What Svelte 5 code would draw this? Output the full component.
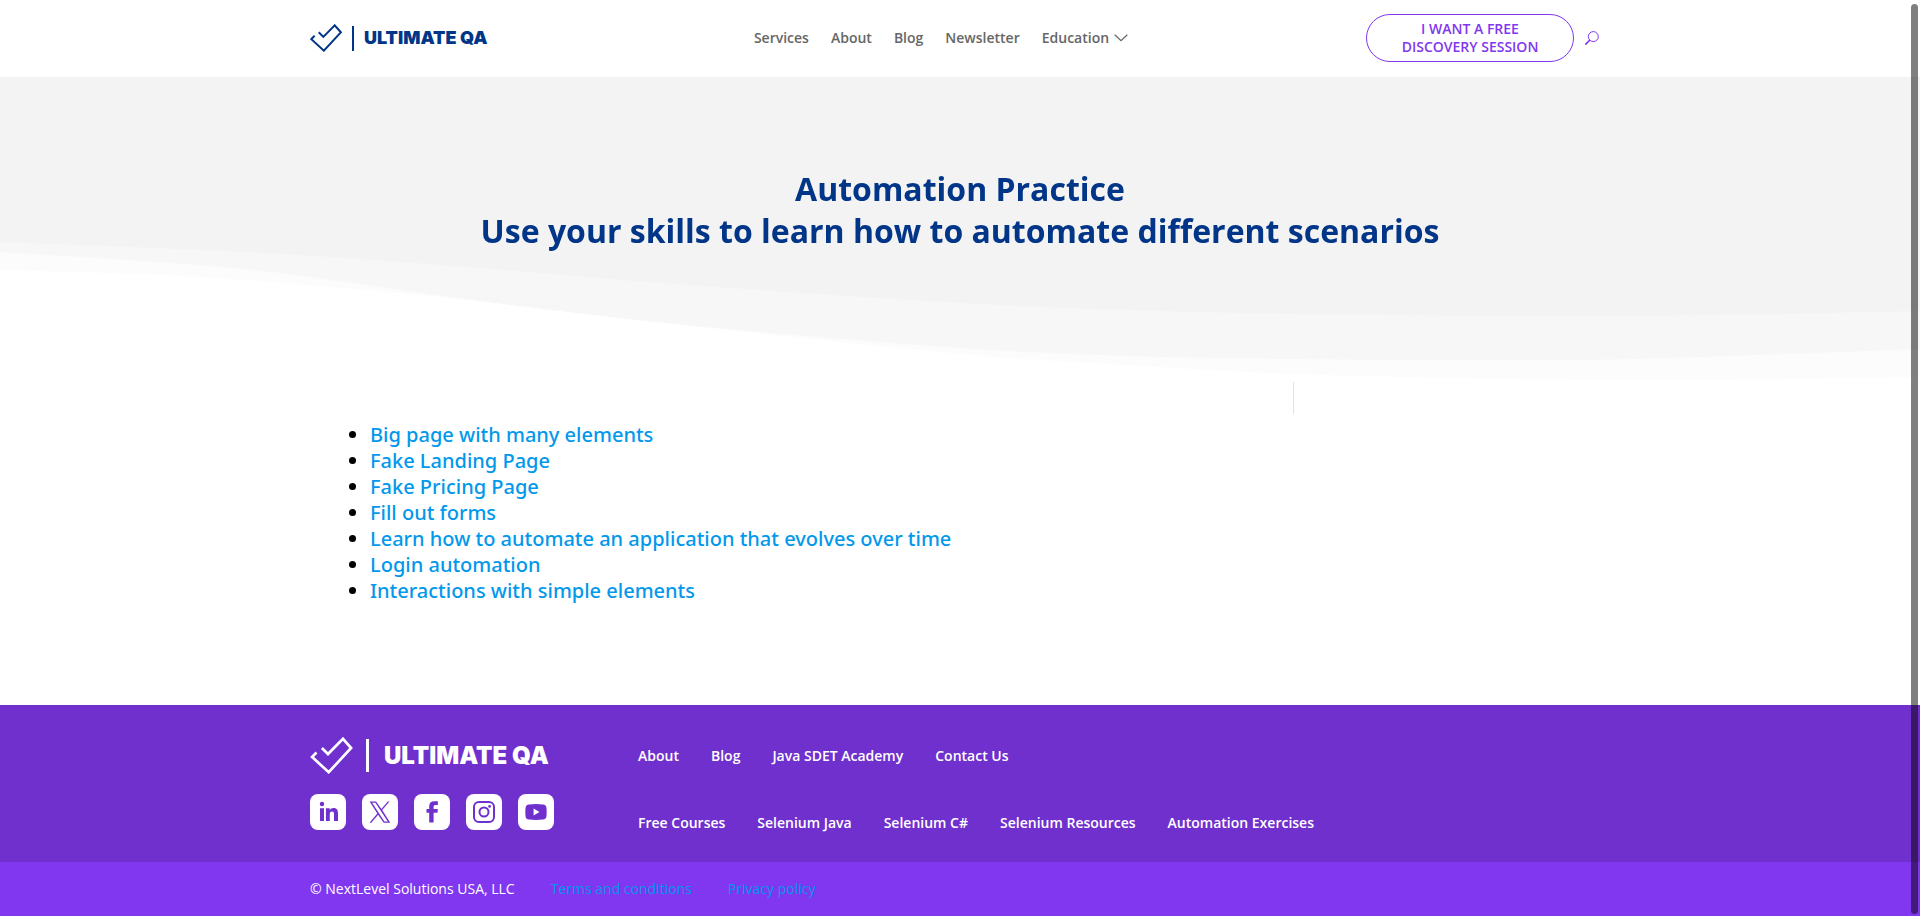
<script>
  const mainLinks = ['Services', 'About', 'Blog', 'Newsletter'];
  const practice = [
    'Big page with many elements',
    'Fake Landing Page',
    'Fake Pricing Page',
    'Fill out forms',
    'Learn how to automate an application that evolves over time',
    'Login automation',
    'Interactions with simple elements'
  ];
  const companyLinks = ['About', 'Blog', 'Java SDET Academy', 'Contact Us'];
  const courseLinks = ['Free Courses', 'Selenium Java', 'Selenium C#', 'Selenium Resources', 'Automation Exercises'];

  // Wave edges, in a 1920 x 150 box, from the palest band to the darkest.
  const waves = [
    { fill: '#fcfcfc', pts: [[0, 38], [184, 44], [367, 58], [480, 69], [674, 92], [960, 122], [1126, 133], [1294, 142], [1512, 147], [1696, 148], [1920, 145]] },
    { fill: '#f7f7f7', pts: [[0, 20], [184, 32], [288, 42], [480, 69], [674, 92], [960, 116], [1126, 124], [1294, 127], [1451, 128], [1635, 127], [1920, 117]] },
    { fill: '#f3f3f3', pts: [[0, 10], [263, 21], [480, 36], [648, 50], [960, 71], [1126, 78], [1294, 82], [1512, 84], [1727, 83], [1920, 79]] }
  ];

  function wavePath(p) {
    let d = `M0 0V${p[0][1]}`;
    for (let i = 0; i < p.length - 1; i++) {
      const a = p[Math.max(i - 1, 0)];
      const b = p[i];
      const c = p[i + 1];
      const e = p[Math.min(i + 2, p.length - 1)];
      const s1 = (c[1] - a[1]) / (c[0] - a[0]);
      const s2 = (e[1] - b[1]) / (e[0] - b[0]);
      const h = (c[0] - b[0]) / 3;
      d += `C${b[0] + h} ${b[1] + s1 * h} ${c[0] - h} ${c[1] - s2 * h} ${c[0]} ${c[1]}`;
    }
    return d + 'V0Z';
  }
</script>

{#snippet mark()}
  <svg class="mark" viewBox="0 0 42 37" aria-hidden="true">
    <path d="M6 15.500L1.600 20L18.200 35.200L40.600 11L32.500 1.800L17.500 17L11.400 11" fill="none" stroke="currentColor" stroke-width="2.700" />
  </svg>
{/snippet}

<header class="top">
  <div class="wrap bar">
    <a class="logo" href="#home">
      {@render mark()}
      <span class="rule"></span>
      <span class="name">ULTIMATE QA</span>
    </a>
    <nav class="menu" aria-label="Main">
      {#each mainLinks as item}
        <a href="#{item}">{item}</a>
      {/each}
      <a class="drop" href="#Education">
        Education
        <svg width="14" height="8" viewBox="0 0 14 8" aria-hidden="true">
          <path d="M0.700 0.700L7 6.700L13.300 0.700" fill="none" stroke="currentColor" stroke-width="1.300" />
        </svg>
      </a>
    </nav>
    <div class="actions">
      <a class="cta" href="#session">I WANT A FREE DISCOVERY SESSION</a>
      <button class="search" type="button" aria-label="Search">
        <svg width="14" height="14" viewBox="0 0 14 14" aria-hidden="true">
          <circle cx="8.300" cy="5.600" r="5" fill="none" stroke="currentColor" stroke-width="1" />
          <path d="M4.600 9.300L0.800 13.100" stroke="currentColor" stroke-width="1.600" stroke-linecap="round" />
        </svg>
      </button>
    </div>
  </div>
</header>

<main>
  <section class="hero">
    <h1>Automation Practice<br />Use your skills to learn how to automate different scenarios</h1>
    <svg class="waves" viewBox="0 0 1920 150" preserveAspectRatio="none" aria-hidden="true">
      {#each waves as wave}
        <path d={wavePath(wave.pts)} fill={wave.fill} />
      {/each}
    </svg>
  </section>

  <section class="wrap content">
    <ul>
      {#each practice as item}
        <li><a href="#practice">{item}</a></li>
      {/each}
    </ul>
    <aside></aside>
  </section>
</main>

<footer>
  <div class="wrap foot">
    <div class="brand">
      <a class="logo large" href="#home">
        {@render mark()}
        <span class="rule"></span>
        <span class="name">ULTIMATE QA</span>
      </a>
      <div class="social">
        <a href="#linkedin" aria-label="LinkedIn">
          <svg viewBox="0 0 36 36"><path d="M10 14.200h4V27h-4zM12 7.800a2.200 2.200 0 1 1 0 4.400a2.200 2.200 0 0 1 0-4.400zM15.900 14.200h3.800v1.800c.7-1.300 2.100-2.100 3.800-2.100c3.600 0 4.500 2.400 4.500 5.700V27h-4v-6.500c0-1.600-.2-2.900-2-2.900s-2.200 1.300-2.200 2.900V27h-3.900z" /></svg>
        </a>
        <a href="#x" aria-label="X">
          <svg viewBox="0 0 36 36"><path fill-rule="evenodd" d="M7.600 7.400h6.500l5.300 7.500L25.800 7.400h1.700L20.200 16L28.200 28.800h-6.500L16.100 20.700L9.300 28.800H7.500L15.300 19.500zM10.100 8.700L22.400 27.500h3.400L13.400 8.700z" /></svg>
        </a>
        <a href="#facebook" aria-label="Facebook">
          <svg viewBox="0 0 36 36"><path d="M15.200 28.500V18.700H12.500v-3.800h2.700v-2.700c0-3.100 1.700-5 5-5h3.700v3.900h-2.400c-1.500 0-1.900.7-1.900 1.900v1.900h4.300l-.5 3.800h-3.800v9.800z" /></svg>
        </a>
        <a href="#instagram" aria-label="Instagram">
          <svg viewBox="0 0 36 36"><rect x="8" y="8" width="20" height="20" rx="5" fill="none" stroke="currentColor" stroke-width="2" /><circle cx="18" cy="18" r="4.500" fill="none" stroke="currentColor" stroke-width="2" /><circle cx="23.600" cy="12.400" r="1.400" /></svg>
        </a>
        <a href="#youtube" aria-label="YouTube">
          <svg viewBox="0 0 36 36"><path fill-rule="evenodd" d="M11 10.400Q18 9.800 25 10.400Q28.300 10.700 28.500 14Q28.900 18 28.500 22Q28.200 25.300 25 25.600Q18 26.200 11 25.600Q7.700 25.300 7.500 22Q7.100 18 7.500 14Q7.800 10.700 11 10.400zM15.600 14.500V21.500L21.500 18z" /></svg>
        </a>
      </div>
    </div>
    <nav class="links" aria-label="Footer">
      <div class="row">
        {#each companyLinks as item}<a href="#{item}">{item}</a>{/each}
      </div>
      <div class="row">
        {#each courseLinks as item}<a href="#courses">{item}</a>{/each}
      </div>
    </nav>
  </div>
  <div class="legal">
    <div class="wrap">
      <span>© NextLevel Solutions USA, LLC</span>
      <a href="#terms">Terms and conditions</a>
      <a href="#privacy">Privacy policy</a>
    </div>
  </div>
</footer>

<div class="scroll-thumb" aria-hidden="true"></div>

<style>
  :global(body) {
    margin: 0;
    background: #fff;
    font-family: 'Open Sans', 'Noto Sans', sans-serif;
    font-size: 14px;
    -webkit-font-smoothing: antialiased;
  }
  a {
    color: inherit;
    text-decoration: none;
  }
  .wrap {
    box-sizing: border-box;
    width: 100%;
    max-width: 1300px;
    margin: 0 auto;
  }
  .bar {
    display: grid;
    grid-template-columns: 1fr auto 1fr;
    align-items: center;
    padding: 14px 0 15px;
  }
  .logo {
    display: flex;
    align-items: center;
    gap: 10px;
    color: #003588;
  }
  .mark {
    width: 32px;
    height: 28px;
  }
  .rule {
    width: 2px;
    height: 25px;
    background: currentColor;
  }
  .name {
    font-family: Inter, sans-serif;
    font-weight: 900;
    font-size: 18px;
    line-height: 24px;
    white-space: nowrap;
  }
  .menu {
    display: flex;
    gap: 22px;
    padding-right: 38px;
    font-weight: 600;
    line-height: 20px;
    color: #666;
  }
  .drop {
    display: flex;
    align-items: center;
    gap: 5px;
  }
  .actions {
    display: flex;
    justify-content: flex-end;
    align-items: center;
    gap: 11px;
    padding-right: 11px;
    color: #8136f0;
  }
  .cta {
    box-sizing: border-box;
    width: 208px;
    padding: 5px 32px;
    border: 1px solid currentColor;
    border-radius: 25px;
    font-weight: 600;
    line-height: 18px;
    text-align: center;
  }
  .search {
    display: flex;
    padding: 0;
    border: 0;
    background: none;
    color: inherit;
  }
  .hero {
    position: relative;
    padding: 91px 0 130px;
    background: linear-gradient(#f3f3f3, #f3f3f3) top / 100% calc(100% - 149px) no-repeat;
  }
  h1 {
    position: relative;
    z-index: 1;
    margin: 0;
    font-weight: 700;
    font-size: 32px;
    line-height: 42px;
    text-align: center;
    color: #003588;
  }
  .waves {
    position: absolute;
    left: 0;
    bottom: 0;
    width: 100%;
    height: 150px;
  }
  .content {
    display: flex;
    justify-content: space-between;
    align-items: flex-start;
    padding-bottom: 101px;
  }
  ul {
    margin: 0;
    padding: 40px 0 0 60px;
    font-family: 'Noto Sans', sans-serif;
    font-size: 20px;
    font-weight: 500;
    line-height: 26px;
    color: #000;
  }
  li a {
    color: #0298ec;
  }
  aside {
    width: 316px;
    height: 32px;
    border-left: 1px solid #e2e2e2;
  }
  footer {
    background: #7030ce;
    color: #fff;
  }
  .foot {
    display: flex;
    align-items: flex-start;
    gap: 84px;
    padding: 32px 0 29px;
  }
  .brand {
    display: flex;
    flex-direction: column;
    gap: 20px;
    width: 244px;
  }
  .large {
    gap: 13px;
    color: #fff;
  }
  .large .mark {
    width: 43px;
    height: 37px;
  }
  .large .rule {
    width: 3px;
    height: 33px;
    margin-right: 2px;
  }
  .large .name {
    font-size: 24px;
  }
  .social {
    display: flex;
    gap: 16px;
  }
  .social a {
    width: 36px;
    height: 36px;
    border-radius: 8px;
    background: #fff;
    color: #7030ce;
  }
  .social svg {
    display: block;
    fill: currentColor;
  }
  .links {
    display: flex;
    flex-direction: column;
    gap: 47px;
    padding-top: 9px;
    font-weight: 600;
    line-height: 20px;
  }
  .row {
    display: flex;
    gap: 32px;
  }
  .legal {
    background: #8136f0;
  }
  .legal .wrap {
    display: flex;
    gap: 36px;
    padding: 17px 0;
    line-height: 20px;
  }
  .legal a {
    color: #0298ec;
  }
  .scroll-thumb {
    position: fixed;
    top: 4px;
    right: 2px;
    bottom: 2px;
    width: 7px;
    border-radius: 4px;
    background: rgba(0, 0, 0, 0.5);
  }
</style>
